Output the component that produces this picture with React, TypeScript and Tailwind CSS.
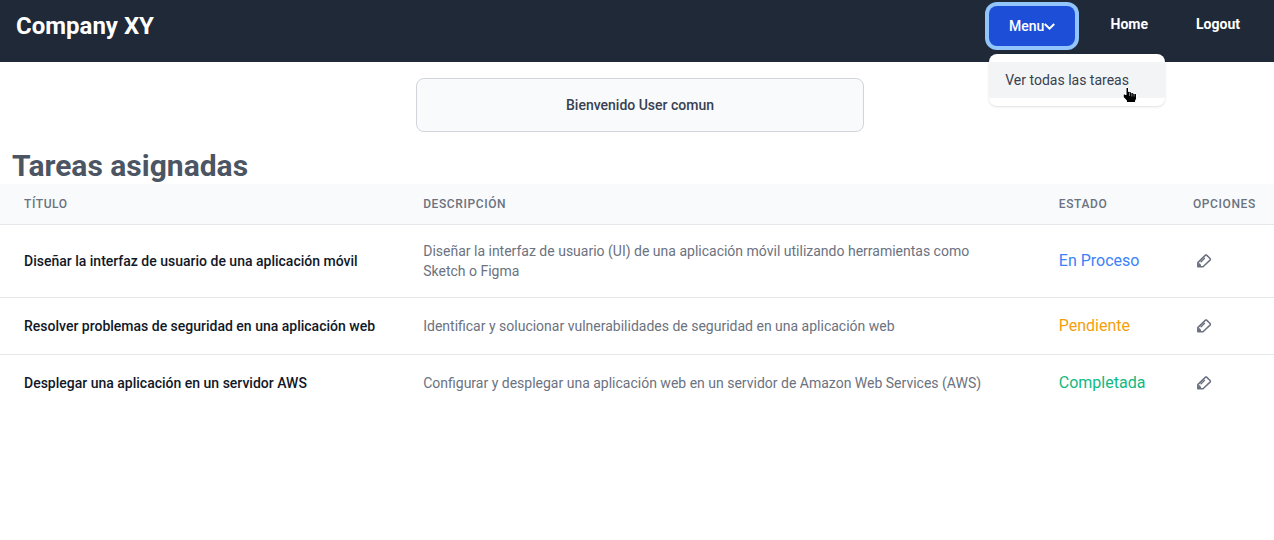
import React from "react";

const tasks = [
  {
    title: "Diseñar la interfaz de usuario de una aplicación móvil",
    description:
      "Diseñar la interfaz de usuario (UI) de una aplicación móvil utilizando herramientas como Sketch o Figma",
    status: "En Proceso",
    color: "text-[#3b82f6]",
    height: "h-[73px]",
  },
  {
    title: "Resolver problemas de seguridad en una aplicación web",
    description: "Identificar y solucionar vulnerabilidades de seguridad en una aplicación web",
    status: "Pendiente",
    color: "text-[#f59e0b]",
    height: "h-[57px]",
  },
  {
    title: "Desplegar una aplicación en un servidor AWS",
    description: "Configurar y desplegar una aplicación web en un servidor de Amazon Web Services (AWS)",
    status: "Completada",
    color: "text-[#10b981]",
    height: "h-[56px]",
  },
];

const columns = "grid grid-cols-[399.2px_635.6px_134.2px_105px] items-center";

function Chevron() {
  return (
    <svg className="h-[11px] w-[11px]" viewBox="0 0 11 11" fill="none" stroke="currentColor" strokeWidth="2">
      <path d="M.8 3 5.5 7.7 10.2 3" />
    </svg>
  );
}

function EditIcon() {
  return (
    <svg className="h-4 w-4 text-[#6b7280]" viewBox="0 0 16 16" fill="none" stroke="currentColor" strokeWidth="1.5" strokeLinejoin="round">
      <path d="M1.8 13.7V9.6L9.5 2.1H10.6L14.3 5.8V6.9L7 13.7Z" />
      <path d="M4.6 9.2 8.8 5.1" strokeWidth="1.4" />
      <path d="M1.8 10.2H3.8L5 12V13.8H1.8Z" fill="currentColor" stroke="none" />
    </svg>
  );
}

function Pointer() {
  return (
    <svg className="pointer-events-none absolute top-[32px] left-[133px] h-[18px] w-[16px]" viewBox="0 0 16 18">
      <path
        d="M4 1.5H6.5V5.5H9V6.5H11.5V7.5H14.5V13L13.5 14.5V16.5H4.5V14.5L1.2 11V8H3L4 9Z"
        fill="#000"
        stroke="#fff"
        strokeWidth="1"
      />
      <path d="M7.5 6.5V10M9.8 7V10.5M12.1 8V10.5" stroke="#aaa" strokeWidth=".7" />
    </svg>
  );
}

export default function App() {
  return (
    <div className="h-[540px] w-full overflow-hidden bg-white font-['Roboto','Liberation_Sans',sans-serif]">
      <nav className="flex h-[62px] items-start justify-between bg-[#1f2937] pr-[34px] pl-4 text-white">
        <span className="mt-[10px] text-2xl font-bold">Company XY</span>
        <div className="flex">
          <div className="relative mt-[6px]">
            <button className="flex h-10 w-[86px] items-center justify-center rounded-lg bg-[#1d4ed8] text-sm font-medium ring-4 ring-[#93c5fd]">
              Menu
              <Chevron />
            </button>
            <div className="absolute top-12 left-0 z-10 h-[52px] w-44 rounded-lg bg-white py-2 shadow-sm">
              <a className="block h-9 bg-[#f3f4f6] px-4 py-2 text-sm text-[#374151]">Ver todas las tareas</a>
              <Pointer />
            </div>
          </div>
          <a className="mt-[14px] ml-[35.3px] text-sm font-bold">Home</a>
          <a className="mt-[14px] ml-12 text-sm font-bold">Logout</a>
        </div>
      </nav>
      <section className="mt-4 ml-[416px] flex h-[54px] w-[448px] items-center justify-center rounded-lg border border-[#d1d5db] bg-[#f9fafb] text-sm font-medium text-[#374151]">
        Bienvenido User comun
      </section>
      <h1 className="mt-4 ml-3 text-[30px] leading-9 font-bold text-[#4b5563]">Tareas asignadas</h1>
      <div role="table">
        <div
          role="row"
          className={`${columns} h-[41px] border-b border-[#e5e7eb] bg-[#f9fafb] text-xs font-medium tracking-wider text-[#6b7280] uppercase`}
        >
          <span className="pl-6">Título</span>
          <span className="pl-6">Descripción</span>
          <span className="pl-6">Estado</span>
          <span className="pl-6">Opciones</span>
        </div>
        {tasks.map((task) => (
          <div
            role="row"
            key={task.title}
            className={`${columns} ${task.height} border-b border-[#e5e7eb] last:border-b-0`}
          >
            <span className="pl-6 text-sm font-medium whitespace-nowrap text-[#111827]">{task.title}</span>
            <span className="px-6 text-sm text-[#6b7280]">{task.description}</span>
            <span className={`pl-6 text-base ${task.color}`}>{task.status}</span>
            <span className="pl-[27px]">
              <EditIcon />
            </span>
          </div>
        ))}
      </div>
    </div>
  );
}
